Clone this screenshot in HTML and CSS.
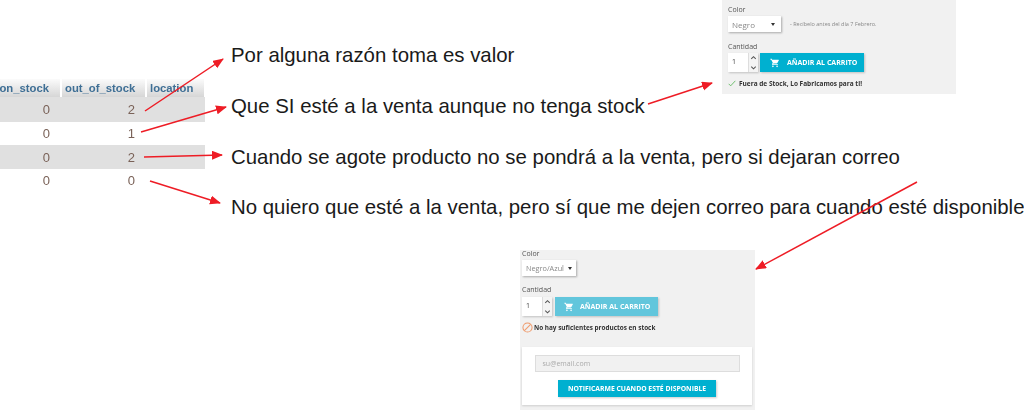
FILE: index.html
```html
<!DOCTYPE html>
<html lang="es">
<head>
<meta charset="utf-8">
<title>Stock</title>
<link rel="stylesheet" href="styles.css">
</head>
<body>
<main class="canvas">
  <table class="stock">
    <thead>
      <tr><th class="c1">on_stock</th><th class="c2">out_of_stock</th><th class="c3">location</th></tr>
    </thead>
    <tbody>
      <tr class="r1 alt"><td>0</td><td>2</td><td></td></tr>
      <tr class="r2"><td>0</td><td>1</td><td></td></tr>
      <tr class="r3 alt"><td>0</td><td>2</td><td></td></tr>
      <tr class="r4"><td>0</td><td>0</td><td></td></tr>
    </tbody>
  </table>

  <p class="note n1">Por alguna razón toma es valor</p>
  <p class="note n2">Que SI esté a la venta aunque no tenga stock</p>
  <p class="note n3">Cuando se agote producto no se pondrá a la venta, pero si dejaran correo</p>
  <p class="note n4">No quiero que esté a la venta, pero sí que me dejen correo para cuando esté disponible</p>

  <section class="panel top">
    <div class="label">Color</div>
    <div class="color-row">
      <div class="select s-top"><span>Negro</span><i class="caret"></i></div>
      <span class="delivery">- Recíbelo antes del día 7 Febrero.</span>
    </div>
    <div class="label qty-label">Cantidad</div>
    <div class="buy">
      <div class="qty">
        <span>1</span>
        <div class="spin">
          <svg viewBox="0 0 8 8"><path d="M2 5 4 3 6 5"/></svg>
          <svg viewBox="0 0 8 8"><path d="M2 3 4 5 6 3"/></svg>
        </div>
      </div>
      <div class="add">
        <svg class="cart" viewBox="0 0 24 24"><path d="M7 18a2 2 0 1 0 0 4 2 2 0 0 0 0-4zm10 0a2 2 0 1 0 0 4 2 2 0 0 0 0-4zM1 2v2h2l3.6 7.6-1.4 2.4c-.7 1.3.3 3 1.8 3h12v-2H7.400l1.100-2h7.500c.7 0 1.400-.4 1.700-1l3.600-6.500c.4-.7-.1-1.500-.9-1.500H5.200l-.9-2H1z"/></svg>
        <span>AÑADIR AL CARRITO</span>
      </div>
    </div>
    <div class="status">
      <svg class="check" viewBox="0 0 12 10"><path d="M1 5.500 4 8.500 11 1"/></svg>
      <span>Fuera de Stock, Lo Fabricamos para ti!</span>
    </div>
  </section>

  <section class="panel bottom">
    <div class="label">Color</div>
    <div class="select s-bottom"><span>Negro/Azul</span><i class="caret"></i></div>
    <div class="label qty-label2">Cantidad</div>
    <div class="buy">
      <div class="qty">
        <span>1</span>
        <div class="spin">
          <svg viewBox="0 0 8 8"><path d="M2 5 4 3 6 5"/></svg>
          <svg viewBox="0 0 8 8"><path d="M2 3 4 5 6 3"/></svg>
        </div>
      </div>
      <div class="add faded">
        <svg class="cart" viewBox="0 0 24 24"><path d="M7 18a2 2 0 1 0 0 4 2 2 0 0 0 0-4zm10 0a2 2 0 1 0 0 4 2 2 0 0 0 0-4zM1 2v2h2l3.6 7.6-1.400 2.400c-.7 1.300.3 3 1.800 3h12v-2H7.400l1.100-2h7.500c.7 0 1.400-.4 1.700-1l3.600-6.500c.4-.7-.1-1.500-.9-1.500H5.200l-.9-2H1z"/></svg>
        <span>AÑADIR AL CARRITO</span>
      </div>
    </div>
    <div class="status st2">
      <svg class="ban" viewBox="0 0 12 12"><circle cx="6" cy="6" r="5"/><path d="M2.600 9.400 9.400 2.600"/></svg>
      <span>No hay suficientes productos en stock</span>
    </div>
    <div class="notify">
      <div class="email">su@email.com</div>
      <div class="notify-btn">NOTIFICARME CUANDO ESTÉ DISPONIBLE</div>
    </div>
  </section>

  <svg class="arrows" viewBox="0 0 1024 410">
    <defs>
      <marker id="head" markerUnits="userSpaceOnUse" markerWidth="12" markerHeight="10" refX="10" refY="4.500" orient="auto">
        <path d="M0 0 11 4.500 0 9z" fill="#ee1c25"/>
      </marker>
    </defs>
    <g class="lines">
      <path marker-end="url(#head)" d="M145 111 223 59"/>
      <path marker-end="url(#head)" d="M141 132 226 107"/>
      <path marker-end="url(#head)" d="M144 157 222 155"/>
      <path marker-end="url(#head)" d="M150 181 220 203"/>
      <path marker-end="url(#head)" d="M648 104 712 83"/>
      <path marker-end="url(#head)" d="M917 182 756 269"/>
    </g>
  </svg>
</main>
</body>
</html>
```
FILE: styles.css
```css
* { box-sizing: border-box; }
html, body { margin: 0; padding: 0; background: #fff; }
.canvas {
  position: relative;
  width: 1024px;
  height: 410px;
  overflow: hidden;
  font-family: "Open Sans", "Liberation Sans", sans-serif;
  color: #444;
}

/* phpMyAdmin table fragment */
.stock {
  position: absolute;
  left: -24px;
  top: 79px;
  width: 230px;
  border-collapse: collapse;
  table-layout: fixed;
  font-family: "Liberation Sans", sans-serif;
  font-size: 11.300px;
  filter: blur(.4px);
}
.stock th {
  height: 18px;
  padding: 0 4px;
  font-weight: bold;
  text-align: left;
  color: #3f6f95;
  background: linear-gradient(#fbfbfb, #d6d6d6);
  border-right: 2px solid #fff;
}
.stock .c1 { width: 85px; text-align: right; padding-right: 11px; }
.stock .c2 { width: 85px; padding-left: 3px; }
.stock .c3 { padding-left: 3px; }
.stock td {
  padding: 0 11px 0 0;
  text-align: right;
  color: #7a6258;
  font-size: 13px;
}
.stock .alt td { background: #e0e0e0; }
.stock .r1 td { height: 25px; }
.stock .r2 td { height: 23px; }
.stock .r3 td { height: 24px; }
.stock .r4 td { height: 22px; }

/* Annotations */
.note {
  position: absolute;
  left: 231px;
  margin: 0;
  font-family: "Liberation Sans", sans-serif;
  font-size: 20.400px;
  line-height: 24px;
  color: #1a1a1a;
  white-space: nowrap;
}
.n1 { top: 43px; }
.n2 { top: 94px; }
.n3 { top: 145px; }
.n4 { top: 195px; }

.arrows {
  position: absolute;
  inset: 0;
  width: 1024px;
  height: 410px;
  pointer-events: none;
}
.lines path { fill: none; stroke: #ee1c25; stroke-width: 1.500; }

/* Product panels */
.panel {
  position: absolute;
  background: #f1f1f1;
  display: flex;
  flex-direction: column;
  align-items: flex-start;
  filter: blur(.35px);
}
.panel.top { left: 722px; top: 0; width: 234px; height: 94px; padding: 5px 0 0 6px; }
.panel.bottom { left: 520px; top: 250px; width: 235px; height: 160px; padding: 0 0 0 2px; }

.label { font-size: 7px; line-height: 10px; color: #555; }
.bottom .label { line-height: 7px; }
.qty-label { margin-top: 10px; }
.qty-label2 { margin-top: 10px; }

.color-row { display: flex; align-items: center; margin-top: 1px; }
.select {
  display: flex;
  align-items: center;
  justify-content: space-between;
  height: 16px;
  background: #fff;
  box-shadow: 1px 1px 2px rgba(0, 0, 0, .3);
  font-size: 8px;
  color: #888;
}
.s-top { width: 53px; padding: 0 6px 0 4px; }
.s-bottom { width: 54px; padding: 0 4px 0 4px; margin-top: 3px; font-size: 7.300px; }
.caret {
  width: 0;
  height: 0;
  border: 2px solid transparent;
  border-top: 3px solid #333;
  border-bottom: 0;
}
.delivery { margin-left: 9px; font-size: 5.500px; color: #888; }

.buy { display: flex; gap: 2px; margin-top: 1px; }
.bottom .buy { margin-top: 4px; gap: 3px; }
.qty {
  display: flex;
  justify-content: space-between;
  width: 30px;
  height: 19px;
  background: #fff;
  box-shadow: 1px 1px 2px rgba(0, 0, 0, .2);
  font-size: 7px;
  color: #444;
}
.qty > span { padding: 4px 0 0 4px; }
.spin { display: flex; flex-direction: column; width: 10px; background: #f4f4f4; border-left: 1px solid #ddd; }
.spin svg { display: block; width: 9px; height: 9.500px; fill: none; stroke: #555; stroke-width: .9; }
.add {
  display: flex;
  align-items: center;
  gap: 7px;
  width: 104px;
  height: 19px;
  padding-left: 10px;
  background: #00b0d0;
  box-shadow: 1px 1px 2px rgba(0, 0, 0, .2);
  color: #fff;
  font-size: 7px;
  font-weight: 700;
  white-space: nowrap;
}
.add.faded { background: #62c6dc; width: 103px; gap: 6px; padding-left: 9px; }
.cart { width: 10px; height: 10px; fill: #fff; flex: none; }

.status {
  display: flex;
  align-items: center;
  gap: 3px;
  margin-top: 7px;
  font-size: 6.500px;
  font-weight: 700;
  color: #333;
  white-space: nowrap;
}
.check { width: 8px; height: 7px; fill: none; stroke: #5cb85c; stroke-width: 1.300; }
.st2 { margin-top: 6px; gap: 1px; font-size: 6.400px; }
.ban { width: 11px; height: 11px; fill: none; stroke: #ef9a6b; stroke-width: 1.100; }

.notify {
  display: flex;
  flex-direction: column;
  align-items: center;
  width: 230px;
  margin-top: 14px;
  padding: 8px 0;
  background: #fff;
  box-shadow: 0 1px 2px rgba(0, 0, 0, .15);
  gap: 8px;
}
.email {
  width: 205px;
  height: 17px;
  padding: 0 7px;
  background: #f1f1f1;
  border: 1px solid #ddd;
  font-size: 7px;
  line-height: 15px;
  color: #aaa;
}
.notify-btn {
  width: 158px;
  height: 17px;
  background: #00b0d0;
  box-shadow: 1px 1px 2px rgba(0, 0, 0, .2);
  color: #fff;
  font-size: 6.800px;
  font-weight: 700;
  line-height: 17px;
  text-align: center;
  white-space: nowrap;
}
```
